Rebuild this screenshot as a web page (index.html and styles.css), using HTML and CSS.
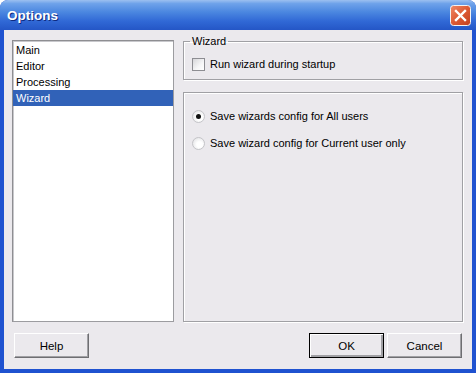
FILE: index.html
```html
<!DOCTYPE html>
<html lang="en">
<head>
  <meta charset="UTF-8" />
  <title>Options</title>
  <link rel="stylesheet" href="styles.css">
</head>
<body>
  <div class="window">
    <div class="titlebar">
      <span class="title">Options</span>
      <span class="close">
        <svg width="21" height="21" viewBox="0 0 21 21">
          <defs>
            <linearGradient id="closeBg" x1="0" y1="0" x2="1" y2="1">
              <stop offset="0" stop-color="#f08a68"/>
              <stop offset="0.5" stop-color="#dd5a34"/>
              <stop offset="1" stop-color="#c2401f"/>
            </linearGradient>
          </defs>
          <rect x="0.5" y="0.5" width="20" height="20" rx="3" fill="url(#closeBg)" stroke="#f3f3f3"/>
          <path d="M6 6 L15 15 M15 6 L6 15" stroke="#fff" stroke-width="2.4" stroke-linecap="square"/>
        </svg>
      </span>
    </div>

    <div class="content">
      <div class="panes">
        <ul class="pages">
          <li>Main</li>
          <li>Editor</li>
          <li>Processing</li>
          <li class="selected">Wizard</li>
        </ul>

        <div class="settings">
          <fieldset class="group">
            <legend>Wizard</legend>
            <label class="choice"><span class="check"></span>Run wizard during startup</label>
          </fieldset>

          <div class="panel">
            <label class="choice"><span class="radio on"></span>Save wizards config for All users</label>
            <label class="choice"><span class="radio"></span>Save wizard config for Current user only</label>
          </div>
        </div>
      </div>

      <div class="buttons">
        <button class="btn help">Help</button>
        <div class="actions">
          <button class="btn default">OK</button>
          <button class="btn">Cancel</button>
        </div>
      </div>
    </div>
  </div>
</body>
</html>
```

FILE: styles.css
```css
body {
  margin: 0;
  background: #fff;
  font-family: 'Liberation Sans', Arial, sans-serif;
  font-size: 11px;
  color: #000;
}

.window {
  width: 476px;
  height: 373px;
  box-sizing: border-box;
  display: flex;
  flex-direction: column;
  background: #1f52d0;
  border-radius: 8px 8px 0 0;
  overflow: hidden;
}

.titlebar {
  height: 30px;
  flex-shrink: 0;
  display: flex;
  align-items: center;
  justify-content: space-between;
  padding: 0 5px 0 7px;
  background: linear-gradient(#9cc0f0 0%, #6ea2ea 12%, #4b87e0 40%, #3169d6 70%, #2456c6 100%);
}

.title {
  color: #fff;
  font-weight: bold;
  font-size: 13.5px;
  text-shadow: 1px 1px #0e2a80;
  margin-top: 1px;
}

.close {
  display: flex;
  margin-top: 1px;
}

.content {
  flex: 1;
  margin: 0 4px 4px;
  background: #ebe9ed;
  padding: 0 9px 0 8px;
}

.panes {
  display: flex;
  height: 287px;
  margin-top: 5px;
}

.pages {
  list-style: none;
  margin: 5px 9px 0 0;
  padding: 1px 0 0;
  width: 162px;
  box-sizing: border-box;
  background: #fff;
  border: 1px solid #9c9ca0;
  border-top-color: #8e8e92;
  border-left-color: #8e8e92;
  box-shadow: inset 1px 1px #c8c8cc;
}

.pages li {
  height: 16px;
  line-height: 16px;
  padding-left: 3px;
}

.pages li.selected {
  background: #3162b8;
  color: #fff;
}

.settings {
  width: 280px;
  display: flex;
  flex-direction: column;
}

.group {
  margin: 0;
  padding: 10px 8px 8px;
  border: 1px solid #a0a0a4;
  box-shadow: inset 1px 1px #fff, 1px 1px #fff;
}

.group legend {
  padding: 0 2px;
  margin-left: -2px;
  line-height: 13px;
}

.panel {
  flex: 1;
  margin-top: 12px;
  padding: 17px 8px 0;
  border: 1px solid #a0a0a4;
  box-shadow: inset 1px 1px #fff, 1px 1px #fff;
  display: flex;
  flex-direction: column;
  gap: 14px;
}

.choice {
  display: flex;
  align-items: center;
  height: 13px;
  line-height: 13px;
  gap: 5px;
}

.check {
  width: 13px;
  height: 13px;
  box-sizing: border-box;
  border: 1px solid #8d8d92;
  background: linear-gradient(135deg, #d6d6d9, #f6f6f7 60%, #fff);
}

.radio {
  width: 13px;
  height: 13px;
  box-sizing: border-box;
  border-radius: 50%;
  border: 1px solid #c4c4c8;
  background: radial-gradient(circle at 60% 60%, #fff 30%, #dcdcdf 100%);
  display: flex;
  align-items: center;
  justify-content: center;
}

.radio.on::after {
  content: "";
  width: 5px;
  height: 5px;
  border-radius: 50%;
  background: #111;
}

.buttons {
  display: flex;
  justify-content: space-between;
  margin-top: 11px;
  padding: 0 1px 0 2px;
}

.actions {
  display: flex;
  gap: 3px;
}

.btn {
  width: 75px;
  height: 25px;
  font-family: inherit;
  font-size: 11.5px;
  background: #ebe9ed;
  color: #000;
  border: 1px solid;
  border-color: #fff #6e6e72 #6e6e72 #fff;
  box-shadow: inset -1px -1px #a0a0a4;
  padding: 1px 0 0;
}

.btn.default {
  border: 1px solid #000;
  box-shadow: inset 1px 1px #fff, inset -2px -2px #a0a0a4, inset -1px -1px #6e6e72;
}
```
